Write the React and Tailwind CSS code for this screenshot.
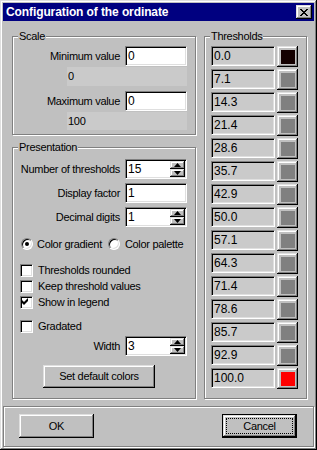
import React from "react";

const RAISED =
  "bg-[#c0c0c0] shadow-[inset_-1px_-1px_0_#000,inset_1px_1px_0_#dfdfdf,inset_-2px_-2px_0_#808080,inset_2px_2px_0_#fff]";
const SUNKEN =
  "border-t border-l border-b border-r border-t-[#808080] border-l-[#808080] border-b-white border-r-white shadow-[inset_1px_1px_0_#000,inset_-1px_-1px_0_#dfdfdf]";

function Group({ label, className, children }) {
  return (
    <div
      className={`relative border border-[#808080] shadow-[1px_1px_0_#fff,inset_1px_1px_0_#fff] ${className}`}
    >
      <span className="absolute left-[5px] -top-[8px] px-[1px] bg-[#c0c0c0] leading-[14px] whitespace-nowrap">
        {label}
      </span>
      {children}
    </div>
  );
}

function Arrow({ up }) {
  return (
    <svg width="7" height="4" viewBox="0 0 7 4" className="block">
      {up ? (
        <polygon points="3.5,0 7,4 0,4" fill="#000" />
      ) : (
        <polygon points="0,0 7,0 3.5,4" fill="#000" />
      )}
    </svg>
  );
}

function Edit({ value, w = "w-[62px]", spin = false, bg = "bg-white", h = "h-[20px]" }) {
  return (
    <div className={`${w} ${h} ${bg} ${SUNKEN} shrink-0 flex items-stretch`}>
      <span className="flex-1 pl-[2px] text-[12px] tracking-normal leading-[16px] pt-[1px]">{value}</span>
      {spin && (
        <div className="w-[15px] flex flex-col mr-[1px] my-[1px]">
          <div className={`flex-1 ${RAISED} flex items-center justify-center`}>
            <Arrow up />
          </div>
          <div className={`flex-1 ${RAISED} flex items-center justify-center`}>
            <Arrow />
          </div>
        </div>
      )}
    </div>
  );
}

function LabeledEdit({ label, value, spin }) {
  return (
    <div className="flex items-center justify-end gap-[5px]">
      <span className="whitespace-nowrap">{label}</span>
      <Edit value={value} spin={spin} />
    </div>
  );
}

function Check({ checked }) {
  return (
    <div className={`w-[13px] h-[13px] shrink-0 bg-white ${SUNKEN} relative`}>
      {checked && (
        <svg width="9" height="9" viewBox="0 0 9 9" className="absolute left-0 top-0">
          <polygon points="1,3 3,5 7,1 7,4 3,8 1,6" fill="#000" />
        </svg>
      )}
    </div>
  );
}

function CheckRow({ label, checked, className = "" }) {
  return (
    <div className={`flex items-center gap-[5px] h-[13px] ${className}`}>
      <Check checked={checked} />
      <span className="leading-[13px] whitespace-nowrap">{label}</span>
    </div>
  );
}

function Radio({ checked }) {
  return (
    <div
      className={`w-[12px] h-[12px] shrink-0 rounded-full bg-white ${SUNKEN} flex items-center justify-center`}
    >
      {checked && <div className="w-[4px] h-[4px] rounded-full bg-black" />}
    </div>
  );
}

function ColorButton({ color }) {
  return (
    <div className={`w-[21px] h-[21px] shrink-0 ${RAISED} flex items-center justify-center`}>
      <div className="w-[14px] h-[14px]" style={{ backgroundColor: color }} />
    </div>
  );
}

const THRESH = [
  "0.0", "7.1", "14.3", "21.4", "28.6", "35.7", "42.9", "50.0",
  "57.1", "64.3", "71.4", "78.6", "85.7", "92.9", "100.0",
];

export default function App() {
  return (
    <div
      className={`w-[317px] h-[450px] bg-[#c0c0c0] p-[3px] flex flex-col font-['Liberation_Sans',Arial,sans-serif] text-[11px] tracking-[-0.3px] text-black shadow-[inset_-1px_-1px_0_#000,inset_1px_1px_0_#dfdfdf,inset_-2px_-2px_0_#808080,inset_2px_2px_0_#fff]`}
    >
      {/* Title bar */}
      <div className="h-[18px] bg-[#000080] flex items-center justify-between pl-[3px] pr-[2px]">
        <span className="text-white font-bold text-[12px] tracking-[-0.1px] leading-[18px] whitespace-nowrap">
          Configuration of the ordinate
        </span>
        <div className={`w-[16px] h-[14px] ${RAISED} flex items-center justify-center`}>
          <svg width="8" height="7" viewBox="0 0 8 7" className="block" shapeRendering="crispEdges">
            <rect x="0" y="0" width="2" height="1" fill="#000" />
            <rect x="6" y="0" width="2" height="1" fill="#000" />
            <rect x="1" y="1" width="2" height="1" fill="#000" />
            <rect x="5" y="1" width="2" height="1" fill="#000" />
            <rect x="2" y="2" width="4" height="1" fill="#000" />
            <rect x="3" y="3" width="2" height="1" fill="#000" />
            <rect x="2" y="4" width="4" height="1" fill="#000" />
            <rect x="1" y="5" width="2" height="1" fill="#000" />
            <rect x="5" y="5" width="2" height="1" fill="#000" />
            <rect x="0" y="6" width="2" height="1" fill="#000" />
            <rect x="6" y="6" width="2" height="1" fill="#000" />
          </svg>
        </div>
      </div>

      {/* Body */}
      <div className="flex px-[9px] pt-[15px] gap-[8px]">
        <div className="flex flex-col gap-[12px] w-[184px] shrink-0">
          <Group label="Scale" className="h-[99px]">
            <div className="flex flex-col pt-[9px] pr-[8px]">
              <LabeledEdit label="Minimum value" value="0" />
              <div className="ml-[54px] mt-[1px] h-[19px] bg-[#cacaca] pl-[1px] leading-[19px]">0</div>
              <div className="mt-[5px]">
                <LabeledEdit label="Maximum value" value="0" />
              </div>
              <div className="ml-[54px] mt-[1px] h-[18px] bg-[#cacaca] pl-[1px] leading-[18px]">100</div>
            </div>
          </Group>

          <Group label="Presentation" className="h-[252px]">
            <div className="flex flex-col pt-[11px] pr-[8px] pl-[7px]">
              <div className="flex flex-col gap-[4px]">
                <LabeledEdit label="Number of thresholds" value="15" spin />
                <LabeledEdit label="Display factor" value="1" />
                <LabeledEdit label="Decimal digits" value="1" spin />
              </div>
              <div className="flex items-center mt-[11px] h-[12px] pl-[1px] whitespace-nowrap">
                <Radio checked />
                <span className="ml-[4px] leading-[12px]">Color gradient</span>
                <div className="ml-[6px]">
                  <Radio />
                </div>
                <span className="ml-[5px] leading-[12px]">Color palette</span>
              </div>
              <CheckRow label="Thresholds rounded" className="mt-[14px]" />
              <CheckRow label="Keep threshold values" className="mt-[3px]" />
              <CheckRow label="Show in legend" checked className="mt-[3px]" />
              <CheckRow label="Gradated" className="mt-[11px]" />
              <div className="mt-[3px]">
                <LabeledEdit label="Width" value="3" spin />
              </div>
              <div
                className={`mt-[9px] ml-[23px] w-[112px] h-[23px] ${RAISED} flex items-center justify-center whitespace-nowrap`}
              >
                Set default colors
              </div>
            </div>
          </Group>
        </div>

        <Group label="Thresholds" className="w-[103px] h-[363px] shrink-0">
          <div className="flex flex-col gap-[2px] pt-[9px] pl-[6px]">
            {THRESH.map((v, i) => (
              <div key={v} className="flex gap-[2px] items-start">
                <Edit value={v} w="w-[64px]" bg="bg-[#cacaca]" />
                <ColorButton
                  color={i === 0 ? "#140000" : i === THRESH.length - 1 ? "#ff0000" : "#808080"}
                />
              </div>
            ))}
          </div>
        </Group>
      </div>

      {/* Bottom button panel */}
      <div className="mt-[7px] flex-1 border border-[#808080] shadow-[1px_1px_0_#fff,inset_1px_1px_0_#fff] flex justify-between items-start pl-[15px] pr-[16px] pt-[7px]">
        <div className={`w-[75px] h-[24px] ${RAISED} flex items-center justify-center`}>OK</div>
        <div className="w-[75px] h-[24px] border border-black">
          <div className={`w-full h-full ${RAISED} p-[3px]`}>
            <div className="w-full h-full border border-dotted border-black flex items-center justify-center">
              Cancel
            </div>
          </div>
        </div>
      </div>
    </div>
  );
}
